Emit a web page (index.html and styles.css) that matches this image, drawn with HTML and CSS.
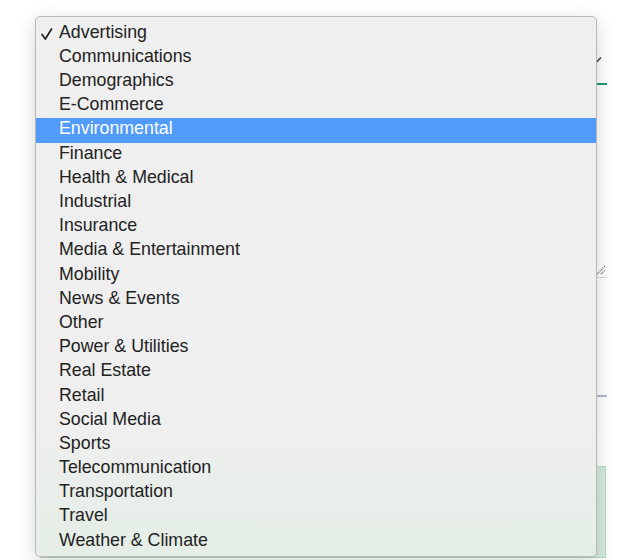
FILE: index.html
```html
<!DOCTYPE html>
<html lang="en">
<head>
<meta charset="utf-8">
<title>Category select</title>
<link rel="stylesheet" href="styles.css">
</head>
<body>
<div class="page">
  <div class="select-field">
    <svg class="chevron" width="12" height="8" viewBox="0 0 12 8"><path d="M1 1.5 L6 6.5 L11 1.5" fill="none" stroke="#444" stroke-width="1.6"/></svg>
  </div>
  <div class="textarea">
    <svg class="grip" width="10" height="10" viewBox="0 0 10 10"><path d="M1 9 L9 1 M5 9 L9 5" stroke="#555" stroke-width="1.2" stroke-dasharray="1 1"/></svg>
  </div>
  <div class="divider"></div>
  <div class="notice"></div>
</div>

<div class="menu" role="listbox">
  <div class="item selected"><span class="check"><svg width="12" height="12" viewBox="0 0 12 12"><path d="M1 6.5 L4.3 11 L10.5 1" fill="none" stroke="#222" stroke-width="1.7" stroke-linecap="round" stroke-linejoin="round"/></svg></span><span class="label">Advertising</span></div>
  <div class="item"><span class="check"></span><span class="label">Communications</span></div>
  <div class="item"><span class="check"></span><span class="label">Demographics</span></div>
  <div class="item"><span class="check"></span><span class="label">E-Commerce</span></div>
  <div class="item active"><span class="check"></span><span class="label">Environmental</span></div>
  <div class="item"><span class="check"></span><span class="label">Finance</span></div>
  <div class="item"><span class="check"></span><span class="label">Health &amp; Medical</span></div>
  <div class="item"><span class="check"></span><span class="label">Industrial</span></div>
  <div class="item"><span class="check"></span><span class="label">Insurance</span></div>
  <div class="item"><span class="check"></span><span class="label">Media &amp; Entertainment</span></div>
  <div class="item"><span class="check"></span><span class="label">Mobility</span></div>
  <div class="item"><span class="check"></span><span class="label">News &amp; Events</span></div>
  <div class="item"><span class="check"></span><span class="label">Other</span></div>
  <div class="item"><span class="check"></span><span class="label">Power &amp; Utilities</span></div>
  <div class="item"><span class="check"></span><span class="label">Real Estate</span></div>
  <div class="item"><span class="check"></span><span class="label">Retail</span></div>
  <div class="item"><span class="check"></span><span class="label">Social Media</span></div>
  <div class="item"><span class="check"></span><span class="label">Sports</span></div>
  <div class="item"><span class="check"></span><span class="label">Telecommunication</span></div>
  <div class="item"><span class="check"></span><span class="label">Transportation</span></div>
  <div class="item"><span class="check"></span><span class="label">Travel</span></div>
  <div class="item"><span class="check"></span><span class="label">Weather &amp; Climate</span></div>
</div>
</body>
</html>
```

FILE: styles.css
```css
* { box-sizing: border-box; }

html, body {
  margin: 0;
  padding: 0;
  background: #ffffff;
  font-family: "Liberation Sans", Arial, sans-serif;
  overflow: hidden;
}

body {
  width: 640px;
  height: 560px;
  position: relative;
}

.page {
  width: 567px;
  margin-left: 40px;
  padding-top: 40px;
  display: flex;
  flex-direction: column;
}

.select-field {
  height: 45px;
  border-bottom: 2px solid #1a9e75;
  display: flex;
  align-items: center;
  justify-content: flex-end;
  padding: 0 5px 0 10px;
}

.chevron { display: block; margin-top: -4px; }

.textarea {
  margin-top: 26px;
  height: 167px;
  border-bottom: 1px solid #d4d9e2;
  display: flex;
  align-items: flex-end;
  justify-content: flex-end;
  padding: 0 1px 2px 0;
}

.grip { display: block; }

.divider {
  margin-top: 117px;
  height: 2px;
  background: #b3bccb;
}

.notice {
  margin-top: 69px;
  height: 92px;
  margin-right: 1px;
  background: #d3ebdb;
  border: 1px solid #b6dcc3;
}

.menu {
  position: absolute;
  left: 35px;
  top: 16px;
  width: 562px;
  height: 541px;
  padding: 4.7px 0 4px;
  background: linear-gradient(to bottom, #efefef 0%, #efefef 76%, #e8eee9 90%, #e4eee6 100%);
  border: 1px solid #b9b9b9;
  border-radius: 5px;
  box-shadow: 0 6px 20px rgba(0, 0, 0, 0.16), 0 0 2px rgba(0, 0, 0, 0.06);
  display: flex;
  flex-direction: column;
}

.item {
  height: 24.2px;
  display: flex;
  align-items: flex-start;
  font-size: 17.8px;
  line-height: 20.2px;
  color: #222222;
  flex-shrink: 0;
}

.item.active {
  background: #519bfd;
  color: #ffffff;
}

.check {
  width: 23px;
  flex-shrink: 0;
  display: flex;
  padding: 6px 0 0 5px;
}

.check svg { display: block; }

.label { white-space: nowrap; }
```
